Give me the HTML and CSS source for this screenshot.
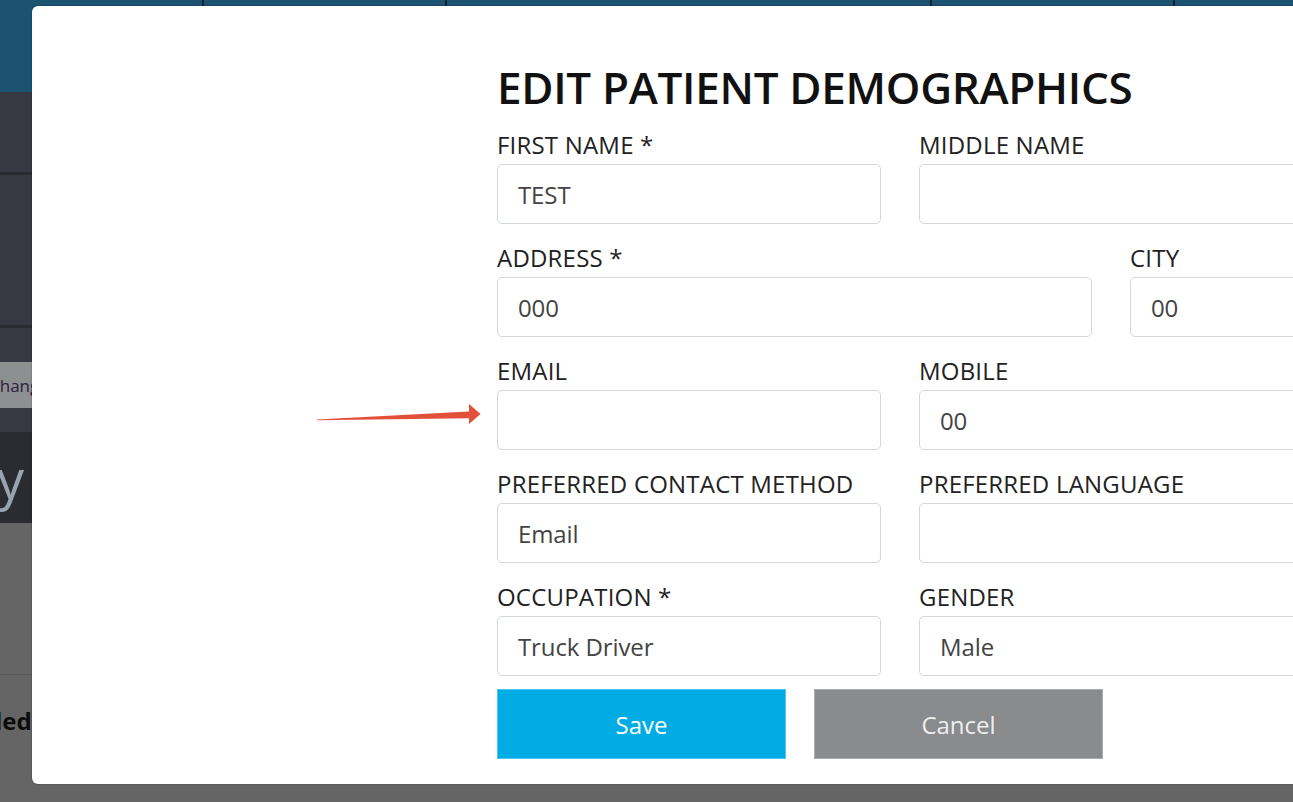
FILE: index.html
```html
<!DOCTYPE html>
<html>
<head>
<meta charset="utf-8">
<link rel="stylesheet" href="styles.css">
</head>
<body>
<div class="page">
  <div class="topbar">
    <div class="tcell c1"></div>
    <div class="tcell c2"></div>
    <div class="tcell c3"></div>
    <div class="tcell c4"></div>
    <div class="tcell c5"></div>
  </div>
  <div class="band b80"></div>
  <div class="sep"></div>
  <div class="band b150"></div>
  <div class="sep"></div>
  <div class="band b32"></div>
  <div class="band btnrow"><span class="ghost-btn">Change</span></div>
  <div class="band b22"></div>
  <div class="darkband"><span class="bigtext">y</span></div>
  <div class="grayband"></div>
  <div class="grayline"></div>
  <div class="grayband2"><span class="boldtext">led</span></div>
</div>

<div class="modal">
  <h1 class="title">EDIT PATIENT DEMOGRAPHICS</h1>
  <div class="form">
    <div class="field span6">
      <label>FIRST NAME *</label>
      <div class="input">TEST</div>
    </div>
    <div class="field span6">
      <label>MIDDLE NAME</label>
      <div class="input"></div>
    </div>
    <div class="field span9">
      <label>ADDRESS *</label>
      <div class="input">000</div>
    </div>
    <div class="field span3">
      <label>CITY</label>
      <div class="input">00</div>
    </div>
    <div class="field span6">
      <label>EMAIL</label>
      <div class="input"></div>
    </div>
    <div class="field span6">
      <label>MOBILE</label>
      <div class="input">00</div>
    </div>
    <div class="field span6">
      <label>PREFERRED CONTACT METHOD</label>
      <div class="input">Email</div>
    </div>
    <div class="field span6">
      <label>PREFERRED LANGUAGE</label>
      <div class="input"></div>
    </div>
    <div class="field span6 last">
      <label>OCCUPATION *</label>
      <div class="input">Truck Driver</div>
    </div>
    <div class="field span6 last">
      <label>GENDER</label>
      <div class="input">Male</div>
    </div>
  </div>
  <div class="buttons">
    <button class="btn save">Save</button>
    <button class="btn cancel">Cancel</button>
  </div>
</div>

<svg class="arrow" width="170" height="26" viewBox="316 402 170 26">
  <polygon points="317,419.6 469,411.5 469,404 480.5,414 469,424 469,418.3 317,420.2" fill="#e2503a"/>
</svg>
</body>
</html>
```

FILE: styles.css
```css
html, body {
  margin: 0;
  padding: 0;
}
body {
  width: 1293px;
  height: 802px;
  overflow: hidden;
  position: relative;
  font-family: "Open Sans", "Liberation Sans", sans-serif;
  background: #646564;
}
.page {
  display: flex;
  flex-direction: column;
}
.topbar {
  height: 92px;
  background: #1c5370;
  display: flex;
}
.tcell {
  border-right: 2px solid #0e2633;
}
.c1 { width: 202px; }
.c2 { width: 241px; }
.c3 { width: 483px; }
.c4 { width: 241px; }
.c5 { flex: 1; border-right: none; }
.band { background: #363842; }
.b80 { height: 80px; }
.b150 { height: 150px; }
.b32 { height: 32px; }
.b22 { height: 22px; }
.sep { height: 3px; background: #2a2b31; }
.btnrow {
  height: 50px;
  display: flex;
  align-items: center;
}
.ghost-btn {
  height: 46px;
  width: 120px;
  background: #8e8f90;
  color: #2a2240;
  font-size: 17px;
  line-height: 48px;
  margin-left: -11px;
}
.darkband {
  height: 91px;
  background: #2b2c31;
  display: flex;
  align-items: center;
}
.bigtext {
  color: #99a3ae;
  font-size: 54px;
  line-height: 54px;
  margin-left: -3px;
  margin-top: 0;
}
.grayband { height: 151px; background: #646564; }
.grayline { height: 1px; background: #575857; }
.grayband2 {
  height: 130px;
  background: #646564;
  display: flex;
  align-items: flex-start;
}
.boldtext {
  font-weight: 700;
  font-size: 24px;
  line-height: 30px;
  color: #0c0c0c;
  margin-top: 31px;
  margin-left: -5px;
  font-family: "Open Sans", sans-serif;
}

.modal {
  position: absolute;
  left: 32px;
  top: 6px;
  width: 1320px;
  height: 778px;
  box-sizing: border-box;
  background: #fff;
  border-radius: 6px;
  box-shadow: 0 0 2px rgba(0, 0, 0, 0.35);
  padding: 55px 0 0 465px;
}
.title {
  margin: 0 0 17px 0;
  font-size: 44px;
  line-height: 52px;
  font-weight: 600;
  color: #111;
  letter-spacing: -0.3px;
}
.form {
  width: 806px;
  display: grid;
  grid-template-columns: repeat(12, 1fr);
  column-gap: 38px;
}
.field {
  display: flex;
  flex-direction: column;
  margin-bottom: 19px;
}
.field.last { margin-bottom: 13px; }
.span6 { grid-column: span 6; }
.span9 { grid-column: span 9; }
.span3 { grid-column: span 3; }
label {
  font-size: 24px;
  line-height: 30px;
  color: #222;
  margin-bottom: 4px;
  white-space: nowrap;
  letter-spacing: 0.2px;
}
.input {
  height: 60px;
  box-sizing: border-box;
  border: 1px solid #d2d7dd;
  border-radius: 5px;
  padding-left: 20px;
  display: flex;
  align-items: center;
  font-size: 24px;
  color: #444;
  letter-spacing: -0.1px;
}
.buttons {
  display: flex;
  gap: 28px;
}
.btn {
  width: 289px;
  height: 70px;
  border: none;
  border-radius: 0;
  font-family: "Open Sans", "Liberation Sans", sans-serif;
  font-size: 24px;
  letter-spacing: 0;
  padding: 0;
}
.save {
  background: #00ace3;
  color: #fff;
  box-shadow: inset 0 0 0 1px #4cc6ee;
}
.cancel {
  background: #898b8d;
  color: #eeeeee;
  box-shadow: inset 0 0 0 1px #a9abad;
}
.arrow {
  position: absolute;
  left: 316px;
  top: 402px;
}
```
